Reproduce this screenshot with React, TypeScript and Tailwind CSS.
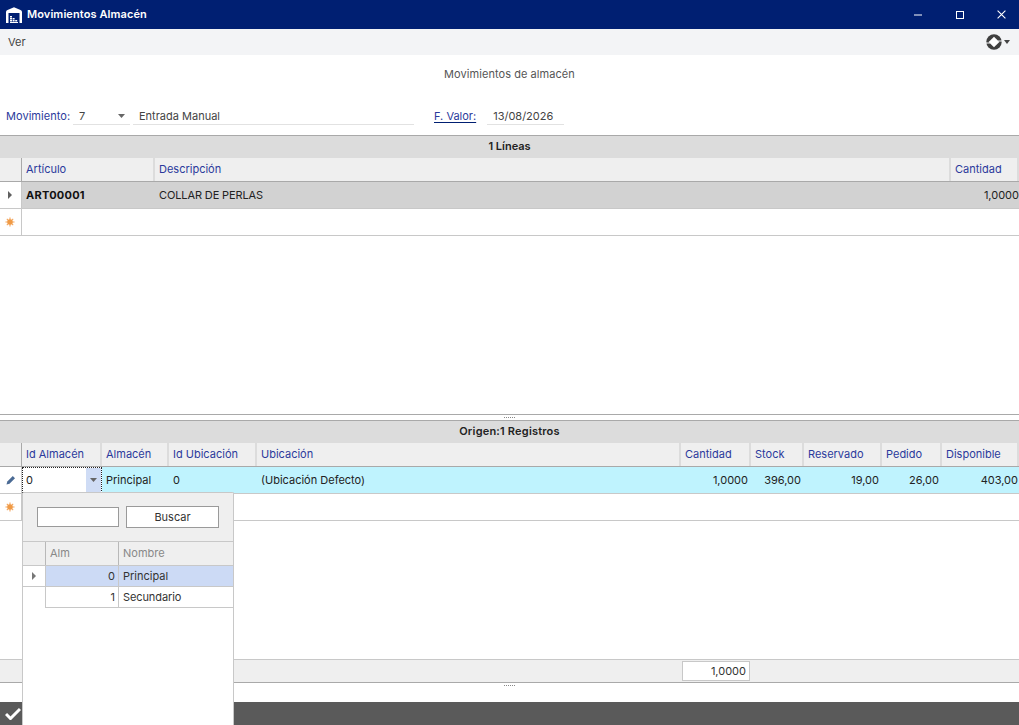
import React from "react";

const Star = () => (
  <svg width="10" height="10" viewBox="0 0 11 11">
    <g stroke="#f3a55c" strokeWidth="1.2">
      <path d="M5.5 0.5v10M0.5 5.5h10M2 2l7 7M9 2l-7 7" />
    </g>
    <circle cx="5.5" cy="5.5" r="3" fill="#f09a45" />
  </svg>
);
const Tri = ({ c = "#606060" }: { c?: string }) => (
  <svg width="4" height="8" viewBox="0 0 4 8"><path d="M0 0l4 4-4 4z" fill={c} /></svg>
);
const Down = ({ c = "#666" }: { c?: string }) => (
  <svg width="7" height="4" viewBox="0 0 7 4"><path d="M0 0h7L3.5 4z" fill={c} /></svg>
);

function Hd({ w, children, last }: { w: string; children?: React.ReactNode; last?: boolean }) {
  return (
    <div className={`${w} shrink-0 h-full pl-1 flex items-center text-[#2b3a9c] border-r-2 border-[#dcdcdc] ${last ? "border-r-0" : ""}`}>
      {children}
    </div>
  );
}

export default function App() {
  return (
    <div className="relative w-[1019px] h-[725px] overflow-hidden bg-white flex flex-col text-[11px] leading-none text-[#222] font-['Inter','Liberation_Sans',sans-serif]">
      {/* Title bar */}
      <div className="h-[29px] shrink-0 bg-[#001f72] flex items-center text-white">
        <svg className="ml-[6px]" width="16" height="16" viewBox="0 0 16 16">
          <path d="M0 5Q0 3.5 1.5 3L8 0.3 14.5 3Q16 3.5 16 5V16H0z" fill="#fff" />
          <rect x="2.5" y="6" width="11" height="10" fill="#001f72" />
          <path d="M4 9h2v1.4H4zM4 11h2v1.4H4zM6.6 11h2v1.4H6.6zM4 13h2v1.4H4zM6.6 13h2v1.4H6.6zM9.2 13h2v1.4H9.2zM4 15h8v1H4z" fill="#fff" />
        </svg>
        <span className="ml-[5px] font-semibold text-[11px] tracking-[0.1px]">Movimientos Almacén</span>
        <div className="ml-auto flex items-center">
          <svg className="mr-[34px]" width="8" height="2" viewBox="0 0 8 2"><rect width="8" height="1" y="0.5" fill="#fff" /></svg>
          <svg className="mr-[33px]" width="8" height="8" viewBox="0 0 8 8"><rect x="0.5" y="0.5" width="7" height="7" fill="none" stroke="#fff" /></svg>
          <svg className="mr-[13px]" width="9" height="9" viewBox="0 0 9 9"><path d="M0.6 0.6l7.8 7.8M8.4 0.6l-7.8 7.8" stroke="#fff" strokeWidth="1.1" /></svg>
        </div>
      </div>

      {/* Menu */}
      <div className="h-[26px] shrink-0 bg-[#f3f4f6] flex items-center pl-2 pr-[9px] text-[#444]">
        <span>Ver</span>
        <div className="ml-auto flex items-center gap-[2px]">
          <svg width="16" height="16" viewBox="0 0 17 17">
            <circle cx="8.5" cy="8.5" r="8.2" fill="#3f3f3f" />
            <path d="M8.5 2.8l5.7 5.7-5.7 5.7-5.7-5.7z" fill="#fff" />
            <path d="M0 9.6h4.4M12.6 7.4H17" stroke="#f3f4f6" strokeWidth="1.2" />
          </svg>
          <svg width="6" height="4" viewBox="0 0 6 4"><path d="M0 0h6L3 4z" fill="#444" /></svg>
        </div>
      </div>

      {/* Heading + form */}
      <div className="h-[80px] shrink-0 flex flex-col">
        <div className="h-[38px] flex items-center justify-center text-[#555] tracking-[0.06px]">Movimientos de almacén</div>
        <div className="mt-[10px] h-[22px] flex items-center text-[#444]">
          <span className="ml-[6px] w-[67px] mt-[5px] tracking-[0.05px] text-[#2b3a9c]">Movimiento:</span>
          <div className="w-[57px] h-[22px] border-b border-[#e2e2e2] pl-[6px] pt-[5px] flex items-center justify-between pr-[5px]">
            <span>7</span><Down />
          </div>
          <div className="ml-[3px] w-[281px] h-[22px] border-b border-[#e2e2e2] pl-[6px] pt-[5px] flex items-center">Entrada Manual</div>
          <span className="ml-[20px] mt-[5px] text-[#2b3a9c] underline underline-offset-2 decoration-[#001f72]">F. Valor:</span>
          <div className="ml-[11px] w-[77px] h-[22px] border-b border-[#e2e2e2] pl-[6px] pt-[5px] flex items-center">13/08/2026</div>
        </div>
      </div>

      {/* Upper section */}
      <div className="h-[23px] shrink-0 border-t border-[#a9a9a9] bg-[#dcdcdc] flex items-center justify-center pb-[2px] font-semibold">1 Líneas</div>
      <div className="h-[24px] shrink-0 bg-[#efefef] border-b border-[#a9a9a9] flex">
        <div className="w-[22px] shrink-0 h-full border-r border-[#a9a9a9]" />
        <Hd w="w-[133px]">Artículo</Hd>
        <Hd w="w-[796px]">Descripción</Hd>
        <Hd w="w-[68px]" last>Cantidad</Hd>
      </div>
      <div className="h-[27px] shrink-0 flex bg-[#d2d2d2] border-b border-[#c8c8c8]">
        <div className="w-[22px] shrink-0 bg-white flex items-center pl-[8px] border-r border-[#c8c8c8]"><Tri /></div>
        <div className="w-[133px] pl-1 flex items-center font-bold tracking-[0.25px] text-[#111]">ART00001</div>
        <div className="flex-1 pl-1 flex items-center tracking-[-0.12px]">COLLAR DE PERLAS</div>
        <div className="w-[68px] flex items-center justify-end">1,0000</div>
      </div>
      <div className="h-[27px] shrink-0 flex border-b border-[#c8c8c8]">
        <div className="w-[22px] shrink-0 flex items-center pl-[5px] border-r border-[#c8c8c8]"><Star /></div>
      </div>
      <div className="flex-1" />

      {/* Splitter */}
      <div className="h-[7px] shrink-0 border-t border-b border-[#a9a9a9] flex items-center justify-center">
        <div className="w-[11px] border-t border-dotted border-[#888]" />
      </div>

      {/* Lower section */}
      <div className="h-[22px] shrink-0 bg-[#dcdcdc] flex items-center justify-center pb-[2px] font-semibold tracking-[0.2px]">Origen:1 Registros</div>
      <div className="h-[24px] shrink-0 bg-[#efefef] border-b border-[#a9a9a9] flex">
        <div className="w-[22px] shrink-0 h-full border-r border-[#a9a9a9]" />
        <Hd w="w-[80px]">Id Almacén</Hd>
        <Hd w="w-[67px]">Almacén</Hd>
        <Hd w="w-[88px]">Id Ubicación</Hd>
        <Hd w="w-[424px]">Ubicación</Hd>
        <Hd w="w-[70px]">Cantidad</Hd>
        <Hd w="w-[53px]">Stock</Hd>
        <Hd w="w-[78px]">Reservado</Hd>
        <Hd w="w-[60px]">Pedido</Hd>
        <Hd w="w-[77px]" last>Disponible</Hd>
      </div>
      <div className="h-[27px] shrink-0 flex bg-[#bff3fe] border-b border-[#c8c8c8]">
        <div className="w-[22px] shrink-0 bg-white flex items-center pl-[6px] border-r border-[#c8c8c8]">
          <svg width="10" height="10" viewBox="0 0 10 10">
            <path d="M0.5 9.5l0.8-3L6.8 1l2.2 2.2-5.5 5.5z" fill="#4a6a94" />
          </svg>
        </div>
        <div className="w-[80px] shrink-0 bg-white border border-dotted border-[#222] flex">
          <div className="flex-1 flex items-center pl-[3px]">0</div>
          <div className="w-[15px] bg-[#cfdcf5] flex items-center justify-center"><Down /></div>
        </div>
        <div className="w-[67px] pl-1 flex items-center">Principal</div>
        <div className="w-[88px] pl-1 flex items-center">0</div>
        <div className="w-[424px] pl-1 flex items-center">(Ubicación Defecto)</div>
        <div className="w-[70px] pr-[3px] flex items-center justify-end">1,0000</div>
        <div className="w-[53px] pr-[3px] flex items-center justify-end">396,00</div>
        <div className="w-[78px] pr-[3px] flex items-center justify-end">19,00</div>
        <div className="w-[60px] pr-[3px] flex items-center justify-end">26,00</div>
        <div className="w-[77px] pr-[1px] flex items-center justify-end">403,00</div>
      </div>
      <div className="h-[27px] shrink-0 flex border-b border-[#c8c8c8]">
        <div className="w-[22px] shrink-0 flex items-center pl-[5px] border-r border-[#c8c8c8]"><Star /></div>
      </div>
      <div className="h-[138px] shrink-0" />

      {/* Totals */}
      <div className="h-[23px] shrink-0 bg-[#efefef] border-t border-[#c8c8c8] flex items-center">
        <div className="ml-[682px] w-[68px] h-[20px] bg-white border border-[#c8c8c8] flex items-center justify-end pr-[3px] text-[#333]">1,0000</div>
      </div>
      <div className="h-[20px] shrink-0 border-t border-[#a9a9a9] flex items-start justify-center pt-[2px]">
        <div className="w-[11px] border-t border-dotted border-[#888]" />
      </div>

      {/* Bottom bar */}
      <div className="h-[23px] shrink-0 bg-[#5a5a5a] flex items-center pl-[5px]">
        <svg width="16" height="13" viewBox="0 0 16 13"><path d="M1 7l4.5 4.5L15 2" fill="none" stroke="#fff" strokeWidth="3" /></svg>
      </div>

      {/* Dropdown */}
      <div className="absolute left-[22px] top-[492px] w-[212px] h-[233px] bg-white border-x border-t border-[#c8c8c8] rounded-t-[2px] flex flex-col text-[#333]">
        <div className="h-[48px] shrink-0 bg-[#efefef] flex items-start pt-[13px]">
          <div className="ml-[14px] mt-[1px] w-[82px] h-[20px] bg-white border border-[#9a9a9a]" />
          <div className="ml-[7px] w-[93px] h-[22px] bg-white border border-[#9a9a9a] flex items-center justify-center">Buscar</div>
        </div>
        <div className="h-[25px] shrink-0 bg-[#efefef] border-y border-[#c8c8c8] flex text-[#888]">
          <div className="w-[23px] h-full border-r border-[#b8b8b8]" />
          <div className="w-[73px] h-full pl-1 flex items-center border-r border-[#b8b8b8]">Alm</div>
          <div className="flex-1 pl-1 flex items-center">Nombre</div>
        </div>
        <div className="h-[21px] shrink-0 flex border-b border-[#c8c8c8]">
          <div className="w-[23px] flex items-center pl-[9px] border-r border-[#c8c8c8]"><Tri c="#777" /></div>
          <div className="w-[73px] bg-[#ccdaf5] flex items-center justify-end pr-[3px] border-r border-[#c8c8c8]">0</div>
          <div className="flex-1 bg-[#ccdaf5] pl-1 flex items-center">Principal</div>
        </div>
        <div className="h-[21px] shrink-0 flex">
          <div className="w-[23px] border-r border-[#c8c8c8]" />
          <div className="w-[73px] flex items-center justify-end pr-[3px] border-r border-b border-[#c8c8c8]">1</div>
          <div className="flex-1 pl-1 flex items-center border-b border-[#c8c8c8] tracking-[-0.1px]">Secundario</div>
        </div>
      </div>
    </div>
  );
}
